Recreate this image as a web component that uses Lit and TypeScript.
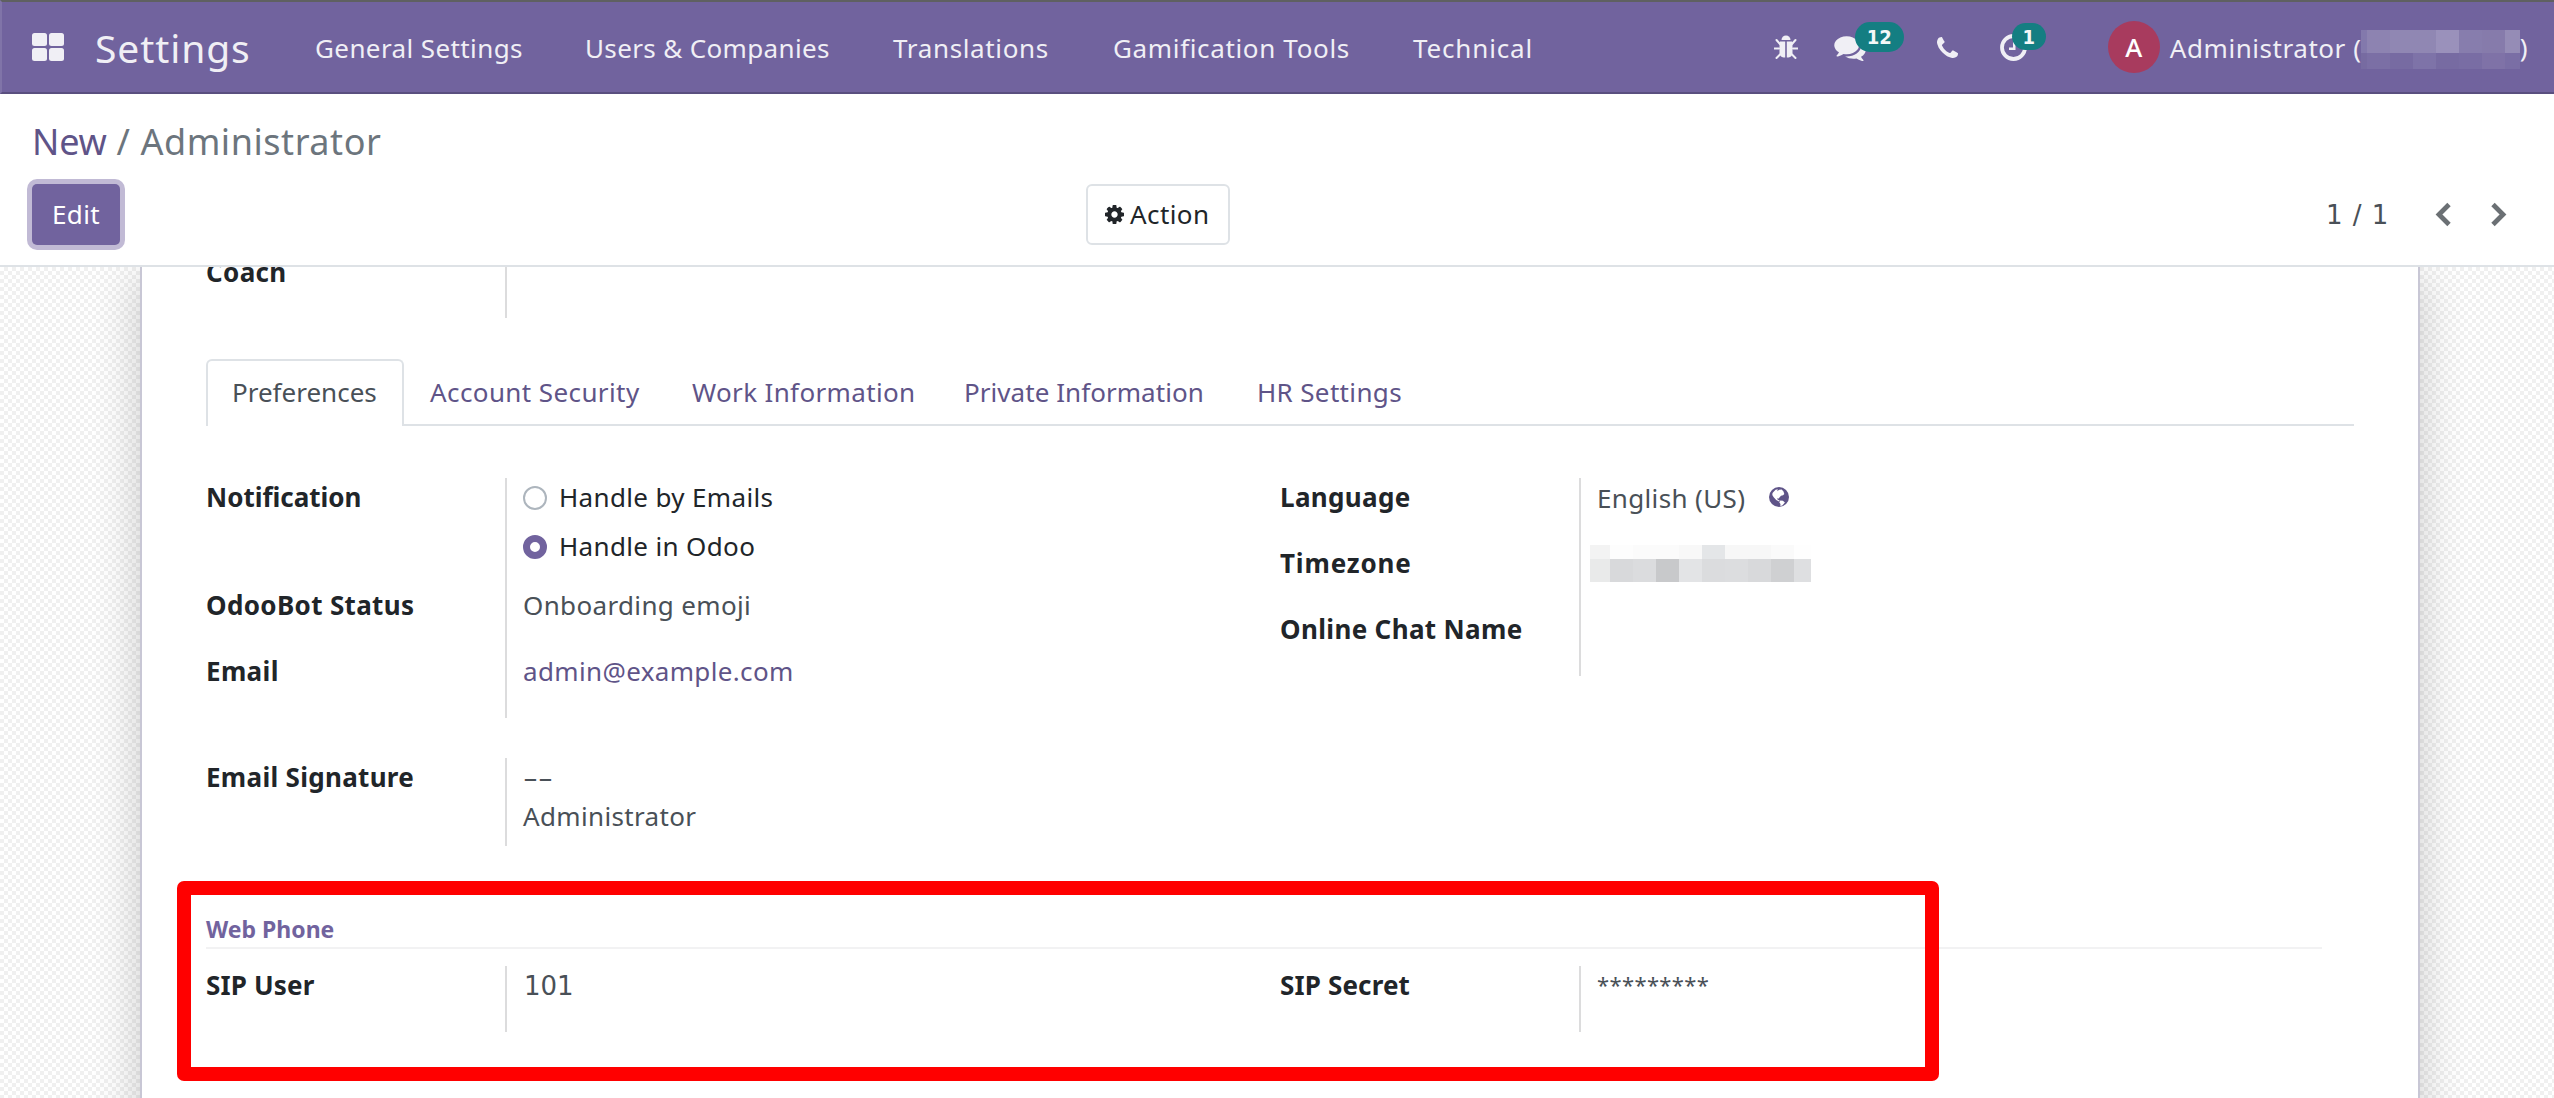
import { LitElement, html, css, svg } from "lit";
import { customElement } from "lit/decorators.js";

const icon = (cls: string, box: string, body: unknown) =>
  html`<svg class=${cls} viewBox=${box} aria-hidden="true">${body}</svg>`;

// Row 1 and row 2 of the masked user database name.
const DB_MASK = [
  ["#8379ac", "#8d83b1", "#9087b3", "#9087b3", "#9a91bb", "#877dad", "#867bab", "#958cb6"],
  ["#776ba1", "#7b6fa5", "#776ba2", "#7e73a8", "#776ba2", "#796da4", "#7f72a7", "#7a6ea5"],
];
const TZ_MASK = [
  ["#f3f3f3", "#fdfdfd", "#fbfbfb", "#fbfbfb", "#f8f8f8", "#e4e6e8", "#f7f7f7", "#f7f7f7", "#fafafa", "#fefefe"],
  ["#e9eaea", "#d8d9db", "#dbdcde", "#c8c9cb", "#e3e4e6", "#dbdcde", "#dcdddf", "#d8d9db", "#cfd0d2", "#dedfe1"],
];

@customElement("app-root")
export class AppRoot extends LitElement {
  static styles = css`
    :host {
      display: flex;
      flex-direction: column;
      width: 2554px;
      height: 1098px;
      overflow: hidden;
      background: #fff;
      color: #212529;
      font-family: "Noto Sans", "Open Sans", sans-serif;
      font-size: 26px;
      line-height: 39px;
      letter-spacing: 0.35px;
      white-space: nowrap;
    }
    * { box-sizing: border-box; }
    svg { display: block; flex: none; fill: currentColor; }
    .ls0 { letter-spacing: 0.05px; }
    .ls1 { letter-spacing: 0.4px; }
    .ls2 { letter-spacing: 0.65px; }
    .ls3 { letter-spacing: 0.85px; }
    .nav {
      flex: none;
      height: 94px;
      display: flex;
      align-items: center;
      padding: 0 26px 0 30px;
      background: #71639e;
      border-top: 2px solid #5f6061;
      border-bottom: 2px solid #5a4f7f;
      border-left: 2px solid #8074a8;
      color: #f0eff5;
    }
    .apps { width: 32px; height: 28px; }
    .brand { font-size: 39px; line-height: 50px; margin-left: 31px; width: 159px; letter-spacing: 0.9px; padding-top: 1px; }
    .menu { display: grid; grid-template-columns: 270px 308px 220px 300px auto; margin-left: 61px; flex: 1; padding-top: 2px; }
    .tray { display: flex; align-items: center; height: 90px; }
    .slot { position: relative; }
    .bug { width: 24px; height: 25px; }
    .chat { width: 32px; height: 27px; margin-left: 36px; }
    .phone { width: 21px; height: 21px; margin-left: 71px; }
    .clock { width: 27px; height: 27px; margin-left: 42px; }
    .badge {
      position: absolute;
      background: #147e82;
      color: #f4f8f8;
      border-radius: 15px;
      font-family: "DejaVu Sans Condensed", "DejaVu Sans", sans-serif;
      font-stretch: condensed;
      font-size: 20px;
      font-weight: 700;
      text-align: center;
      letter-spacing: 0;
    }
    .b12 { left: 57px; top: -12px; width: 49px; height: 30px; line-height: 30px; }
    .b1 { left: 54px; top: -11px; width: 34px; height: 27px; line-height: 28px; }
    .avatar {
      width: 52px; height: 52px; border-radius: 50%;
      background: #a83b5e; color: #fff;
      margin-left: 81px;
      text-align: center; line-height: 53px; font-size: 26px; font-weight: 500;
    }
    .user { margin-left: 10px; width: 191px; letter-spacing: 0.55px; padding-top: 2px; }
    .mask { display: grid; flex: none; }
    .dbmask { width: 159px; height: 39px; grid-template-columns: 6px repeat(6, 23px) 15px; grid-template-rows: 23px 16px; margin-top: 5px; }
    .tzmask { width: 221px; height: 37px; grid-template-columns: 20px repeat(8, 23px) 17px; grid-template-rows: 14px 23px; margin: 1px 0 0 -7px; }

    .panel {
      flex: none;
      height: 173px;
      padding: 24px 47px 0 32px;
      border-bottom: 2px solid #dee2e6;
    }
    .crumbs { font-size: 36px; line-height: 47px; height: 48px; color: #6c757d; letter-spacing: 0.55px; }
    .crumbs a { letter-spacing: -0.2px; }
    .crumbs a, .link { color: #5f5488; }
    .bar { display: grid; grid-template-columns: 1054px 1fr auto; align-items: center; margin-top: 18px; }
    .edit {
      width: 88px; height: 61px; border-radius: 5px;
      background: #71639e; color: #fff;
      box-shadow: 0 0 0 5px #c1bad5;
      text-align: center; line-height: 60px;
    }
    .action {
      width: 144px; height: 61px; border-radius: 6px;
      border: 2px solid #dee2e6;
      display: flex; align-items: center; padding-left: 17px; gap: 6px;
    }
    .gear { width: 19px; height: 19px; }
    .pager { display: flex; align-items: center; color: #495057; }
    .num { font-family: "DejaVu Sans", "Noto Sans", sans-serif; letter-spacing: 0; padding: 1px 0 0 1px; }
    .count { width: 110px; letter-spacing: 1px; }
    .chev { width: 17px; height: 25px; color: #6b7074; margin-right: 38px; }
    .chev.last { margin-right: 0; }

    .content {
      flex: 1;
      min-height: 0;
      overflow: hidden;
      padding: 0 134px 0 140px;
      background-color: #fff;
      background-image: conic-gradient(#f0f0f0 25%, transparent 0 50%, #f0f0f0 0 75%, transparent 0);
      background-size: 8px 8px;
    }
    .sheet {
      height: 900px;
      background: #fff;
      border: 2px solid #c8c7d5;
      border-width: 0 2px;
      box-shadow: 0 10px 44px rgba(0, 0, 0, 0.2);
      padding: 0 64px;
      display: flex;
      flex-direction: column;
    }
    .cols { display: grid; grid-template-columns: 1074px 1fr; align-items: start; }
    .group { display: grid; grid-template-columns: 299px auto; }
    .labels, .values { display: flex; flex-direction: column; align-items: flex-start; }
    .labels { font-weight: 700; }
    .values { border-left: 2px solid #dcdcdd; padding-left: 16px; color: #495057; }
    .coach { height: 51px; overflow: hidden; }
    .coach .labels { margin-top: -14px; }
    .tabs { display: grid; grid-template-columns: 198px 262px 272px 293px auto; height: 67px; margin-top: 41px; border-bottom: 2px solid #dee2e6; width: 2148px; }
    .tab { padding: 14px 0 0 26px; color: #5f5488; }
    .tab.on {
      height: 67px;
      padding: 12px 0 0 24px;
      color: #495057; background: #fff;
      border: 2px solid #dee2e6; border-bottom: 0;
      border-radius: 6px 6px 0 0;
      letter-spacing: 0;
    }
    .prefs { margin-top: 52px; }
    .opt { display: flex; align-items: center; gap: 12px; height: 49px; color: #212529; margin-top: -5px; }
    .opt + .opt { margin: 0 0 15px; }
    .radio { width: 24px; height: 24px; border: 2px solid #adb5bd; border-radius: 50%; }
    .radio.on { border: 7px solid #71639e; }
    .left { height: 240px; }
    .right { height: 198px; }
    .r { height: 66px; }
    .tall { height: 108px; letter-spacing: 0; }
    .lang { display: flex; gap: 24px; padding-top: 1px; }
    .globe { width: 20px; height: 20px; margin-top: 8px; color: #5f5488; }
    .sig { margin-top: 40px; height: 88px; }
    .sig .labels { letter-spacing: 0.3px; }
    .dashes { transform: scaleX(1.78); transform-origin: 0 50%; letter-spacing: 0; }
    .title {
      margin-top: 64px; padding-top: 2px; height: 39px; width: 2116px;
      font-size: 23px; line-height: 34px; font-weight: 700; letter-spacing: 0;
      color: #71639e; border-bottom: 2px solid #f2f2f3;
    }
    .sip { margin-top: 17px; }
    .sip .group { height: 66px; }
    .sip .labels { letter-spacing: 0.15px; }
    .stars { font-size: 22px; letter-spacing: 0.35px; line-height: 36px; }
    .wrap { position: relative; }
    .mark {
      position: absolute; left: -29px; top: 35px; width: 1762px; height: 200px;
      border-radius: 7px;
      background: linear-gradient(#f00, #f00) top / 100% 14px no-repeat,
        linear-gradient(#f00, #f00) bottom / 100% 14px no-repeat,
        linear-gradient(#f00, #f00) left / 14px 100% no-repeat,
        linear-gradient(#f00, #f00) right / 14px 100% no-repeat;
    }
  `;

  private mask(cls: string, rows: string[][]) {
    return html`<span class="mask ${cls}">${rows.flat().map((c) => html`<i style="background:${c}"></i>`)}</span>`;
  }

  render() {
    return html`
      <header class="nav">
        ${icon("apps", "0 0 32 28", svg`<rect width="15" height="13" rx="2.5"/><rect x="17" width="15" height="13" rx="2.5"/><rect y="15" width="15" height="13" rx="2.5"/><rect x="17" y="15" width="15" height="13" rx="2.5"/>`)}
        <span class="brand">Settings</span>
        <nav class="menu">
          <span class="ls1">General Settings</span>
          <span>Users &amp; Companies</span>
          <span class="ls2">Translations</span>
          <span class="ls2">Gamification Tools</span>
          <span class="ls3">Technical</span>
        </nav>
        <div class="tray">
          ${icon("bug", "0 0 24 25", svg`<path d="M7.5 5a4.5 4.5 0 0 1 9 0z"/><path d="M6 6.5h5.2V22.500H9.500Q6 22 5.500 18V9zM12.800 6.500H18l.500 2.500v9q-.5 4-4 4.500h-1.700z"/><path d="M6 9 2.500 5M18 9l3.500-4M5 13.500H0.500M19 13.500h4.500M6.500 19l-4 4M17.500 19l4 4" stroke="currentColor" stroke-width="2" fill="none" stroke-linecap="round"/>`)}
          <span class="slot">
            ${icon("chat", "0 0 1792 1536", svg`<path transform="translate(0 -128)" d="M1408 768q0 139-94 257t-256.500 186.500-353.500 68.500q-86 0-176-16-124 88-278 128-36 9-86 16h-3q-11 0-20.500-8t-11.500-21q-1-3-1-6.500t.500-6.500 2-6l2.500-5 3.500-5.500 4-5 4.500-5 4-4.500q5-6 23-25t26-29.500 22.500-29 25-38.500 20.500-44q-124-72-195-177t-71-224q0-139 94-257t256.500-186.500 353.500-68.500 353.500 68.500 256.500 186.500 94 257zm384 256q0 120-71 224.500t-195 176.500q10 24 20.500 44t25 38.500 22.500 29 26 29.500 23 25q1 1 4 4.500t4.500 5 4 5 3.500 5.500l2.500 5 2 6 .500 6.500-1 6.500q-3 14-13 22t-22 7q-50-7-86-16-154-40-278-128-90 16-176 16-271 0-472-132 58 4 88 4 161 0 309-45t264-129q125-92 192-212t67-254q0-77-23-152 129 71 204 178t75 230z"/>`)}
            <span class="badge b12">12</span>
          </span>
          ${icon("phone", "0 0 1408 1408", svg`<path d="M1408 1112q0 27-10 70.500t-21 68.500q-21 50-122 106-94 51-186 51-27 0-53-3.500t-57.500-12.500-47-14.500-55.500-20.500-49-18q-98-35-175-83-127-79-264-216T152 776q-48-77-83-175-3-9-18-49t-20.500-55.500-14.500-47-12.500-57.500T0 339q0-92 51-186Q107 52 157 31q25-11 68.500-21T296 0q14 0 21 3 18 6 53 76 11 19 30 54t35 63.500 31 53.500q3 4 17.500 25t21.500 35.500 7 28.500q0 20-28.500 50t-62 55-62 53-28.500 46q0 9 5 22.500t8.500 20.500 14 24 11.500 19q76 137 174 235t235 174q2 1 19 11.500t24 14 20.500 8.500 22.500 5q18 0 46-28.500t53-62 55-62 50-28.500q14 0 28.500 7t35.500 21.500 25 17.500q25 15 53.500 31t63.500 35 54 30q70 35 76 53 3 7 3 21z"/>`)}
          <span class="slot">
            ${icon("clock", "0 0 27 27", svg`<circle cx="13.500" cy="13.500" r="11.500" fill="none" stroke="currentColor" stroke-width="3.800"/><path d="M13 7h2.500v9H9v-2.500h4z"/>`)}
            <span class="badge b1">1</span>
          </span>
          <span class="avatar">A</span>
          <span class="user">Administrator (</span>
          ${this.mask("dbmask", DB_MASK)}
          <span>)</span>
        </div>
      </header>

      <section class="panel">
        <div class="crumbs"><a>New</a> / Administrator</div>
        <div class="bar">
          <div class="edit">Edit</div>
          <div class="action">
            ${icon("gear", "0 0 1536 1536", svg`<path d="M1024 768q0-106-75-181t-181-75-181 75-75 181 75 181 181 75 181-75 75-181zm512-109v222q0 12-8 23t-20 13l-185 28q-19 54-39 91 35 50 107 138 10 12 10 25t-9 23q-27 37-99 108t-94 71q-12 0-26-9l-138-108q-44 23-91 38-16 136-29 186-7 28-36 28H657q-14 0-24.500-8.500T621 1506l-28-184q-49-16-90-37l-141 107q-10 9-25 9-14 0-25-11-126-114-165-168-7-10-7-23 0-12 8-23 15-21 51-66.500t54-70.500q-27-50-41-99L29 913q-13-2-21-12.500T0 877V655q0-12 8-23t19-13l186-28q14-46 39-92-40-57-107-138-10-12-10-24 0-10 9-23 26-36 98.500-107.500T337 135q13 0 26 10l138 107q44-23 91-38 16-136 29-186 7-28 36-28h222q14 0 24.500 8.500T915 30l28 184q49 16 90 37l142-107q9-9 24-9 13 0 25 10 129 119 165 170 7 8 7 22 0 12-8 23-15 21-51 66.500t-54 70.500q26 50 41 98l183 28q13 2 21 12.500t8 23.500z"/>`)}
            <span class="ls1">Action</span>
          </div>
          <div class="pager">
            <span class="num count">1 / 1</span>
            ${icon("chev", "0 0 17 25", svg`<path d="M14 2.500 4 12.500l10 10" fill="none" stroke="currentColor" stroke-width="4.800"/>`)}
            ${icon("chev last", "0 0 17 25", svg`<path d="m3 2.500 10 10-10 10" fill="none" stroke="currentColor" stroke-width="4.800"/>`)}
          </div>
        </div>
      </section>

      <main class="content">
        <div class="sheet">
          <div class="group coach">
            <div class="labels"><span>Coach</span></div>
            <div class="values"></div>
          </div>
          <div class="tabs">
            <span class="tab on">Preferences</span>
            <span class="tab ls1">Account Security</span>
            <span class="tab">Work Information</span>
            <span class="tab ls0">Private Information</span>
            <span class="tab">HR Settings</span>
          </div>
          <div class="cols prefs">
            <div class="group left">
              <div class="labels">
                <span class="tall">Notification</span>
                <span class="r">OdooBot Status</span>
                <span>Email</span>
              </div>
              <div class="values">
                <label class="opt"><i class="radio"></i>Handle by Emails</label>
                <label class="opt"><i class="radio on"></i>Handle in Odoo</label>
                <span class="r">Onboarding emoji</span>
                <span class="link">admin@example.com</span>
              </div>
            </div>
            <div class="group right">
              <div class="labels">
                <span class="r">Language</span>
                <span class="r ls3">Timezone</span>
                <span>Online Chat Name</span>
              </div>
              <div class="values">
                <span class="r lang">English (US) ${icon("globe", "0 0 20 20", svg`<circle cx="10" cy="10" r="10"/><path fill="#fff" d="M3.500 6 6.500 2.800l2.300-.6-.6 2 2-1.400 2.500-.4 1.800 2 .8 2.600-1.300 1.300-2 .5-1.300 1.500-1.400 1.500-1-.8.2 1.600 2.300 1.200-.8.600-2.800-1.400L4.500 10 3.300 8zM11.300 13.600l2.600.2 2 1.600-2.600 3-2 .5.200-2-1.200-1.500z"/>`)}</span>
                ${this.mask("tzmask", TZ_MASK)}
              </div>
            </div>
          </div>
          <div class="group sig">
            <div class="labels"><span>Email Signature</span></div>
            <div class="values"><span class="dashes">--</span><span>Administrator</span></div>
          </div>
          <div class="wrap">
            <div class="title">Web Phone</div>
            <div class="cols sip">
              <div class="group"><div class="labels">SIP User</div><div class="values"><span class="num">101</span></div></div>
              <div class="group"><div class="labels">SIP Secret</div><div class="values"><span class="stars">*********</span></div></div>
            </div>
            <div class="mark"></div>
          </div>
        </div>
      </main>
    `;
  }
}
